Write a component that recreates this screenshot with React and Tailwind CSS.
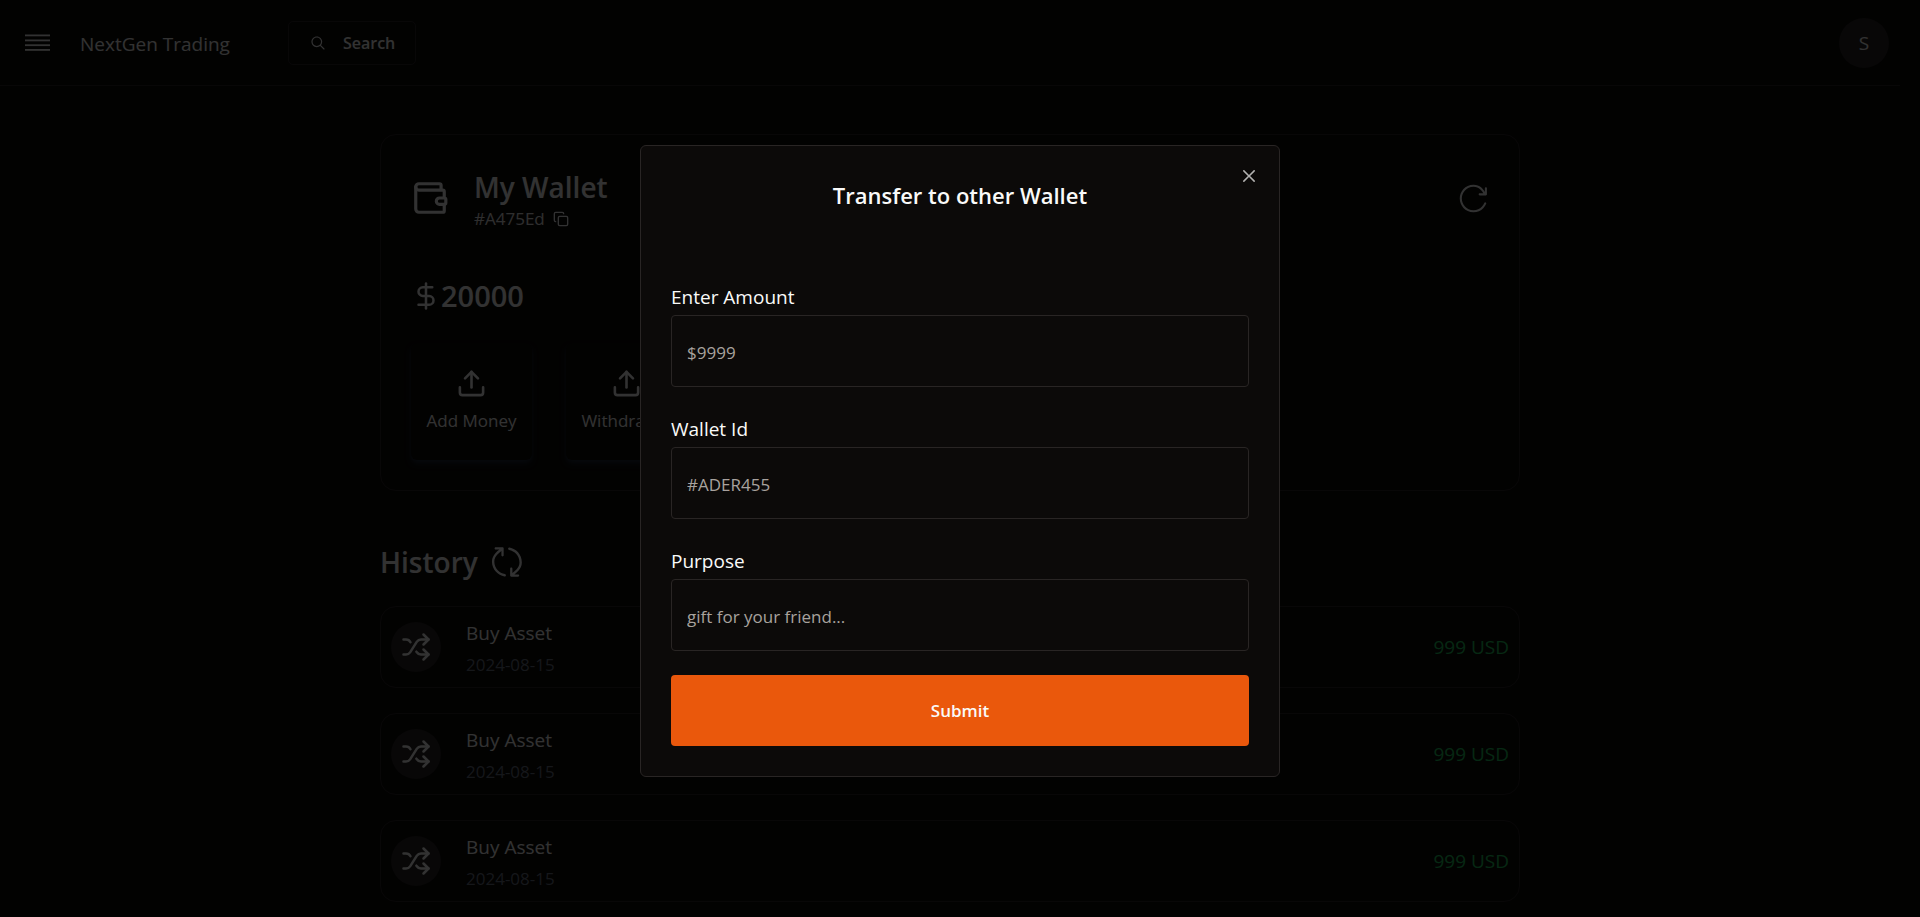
import React from "react";
import { Copy, DollarSign, Shuffle, Upload, Wallet } from "lucide-react";
import { RxCross2, RxMagnifyingGlass, RxReload, RxUpdate } from "react-icons/rx";

const actions = ["Add Money", "Withdrawal", "Transfer"];

const history = [
  { id: 1, title: "Buy Asset", date: "2024-08-15", amount: "999 USD" },
  { id: 2, title: "Buy Asset", date: "2024-08-15", amount: "999 USD" },
  { id: 3, title: "Buy Asset", date: "2024-08-15", amount: "999 USD" },
];

const fields = [
  { id: "amount", label: "Enter Amount", placeholder: "$9999" },
  { id: "wallet-id", label: "Wallet Id", placeholder: "#ADER455" },
  { id: "purpose", label: "Purpose", placeholder: "gift for your friend..." },
];

function MenuIcon() {
  return (
    <svg width="25" height="18" viewBox="0 0 25 18" fill="currentColor" aria-hidden="true">
      <rect y="0.5" width="25" height="1.8" />
      <rect y="5.5" width="25" height="1.8" />
      <rect y="10.3" width="25" height="1.8" />
      <rect y="15" width="25" height="1.8" />
    </svg>
  );
}

function Navbar() {
  return (
    <header className="flex h-[86px] items-center justify-between border-b border-[#292524] pr-[11px] pl-[25px]">
      <div className="flex items-center">
        <button type="button" aria-label="Open menu" className="flex">
          <MenuIcon />
        </button>
        <p className="ml-[30px] pt-0.5 text-[19px] leading-7">NextGen Trading</p>
        <button
          type="button"
          className="ml-[58px] flex h-11 items-center gap-4 rounded-[5px] border border-[#292524] px-5 text-[16px] leading-6 font-semibold"
        >
          <RxMagnifyingGlass className="size-[18px]" />
          Search
        </button>
      </div>
      <button
        type="button"
        aria-label="Account"
        className="flex size-[50px] items-center justify-center rounded-full bg-[#292524] pt-0.5 text-[19px]"
      >
        S
      </button>
    </header>
  );
}

function WalletCard() {
  return (
    <section className="rounded-2xl border border-[#292524] px-[30px] pt-7 pb-[30px]">
      <div className="flex items-center justify-between">
        <div className="flex items-center gap-[25px]">
          <Wallet className="size-[38px]" />
          <div className="pt-1.5">
            <h1 className="text-[28px] leading-9 font-semibold">My Wallet</h1>
            <div className="flex items-center gap-2 leading-7">
              <p className="text-[17px] text-stone-200">#A475Ed</p>
              <button type="button" aria-label="Copy wallet id">
                <Copy className="size-4" strokeWidth={2} />
              </button>
            </div>
          </div>
        </div>
        <button type="button" aria-label="Refresh wallet">
          <RxReload className="size-[31px]" />
        </button>
      </div>
      <div className="mt-[38px] flex items-center">
        <DollarSign className="size-[30px]" />
        <span className="text-[29px] leading-[50px] font-semibold">20000</span>
      </div>
      <div className="mt-[22px] flex gap-[34px]">
        {actions.map((label) => (
          <button
            key={label}
            type="button"
            className="flex h-[117px] w-[121px] flex-col items-center justify-center rounded-md text-[17px] leading-7 shadow-md shadow-[#1e293b]"
          >
            <Upload className="mb-2 size-[31px]" />
            {label}
          </button>
        ))}
      </div>
    </section>
  );
}

function History() {
  return (
    <section className="pt-[51px]">
      <div className="flex items-center gap-3">
        <h2 className="text-[28px] leading-10 font-semibold">History</h2>
        <button type="button" aria-label="Refresh history">
          <RxUpdate className="size-[34px]" />
        </button>
      </div>
      <ul className="mt-6 flex flex-col gap-[25px]">
        {history.map((item) => (
          <li
            key={item.id}
            className="flex h-[82px] items-center justify-between rounded-2xl border border-[#292524] px-2.5"
          >
            <div className="flex items-center gap-[25px]">
              <div className="flex size-[50px] items-center justify-center rounded-full bg-[#292524]">
                <Shuffle className="size-[30px]" />
              </div>
              <div className="pt-1">
                <p className="text-[19px] leading-8">{item.title}</p>
                <p className="text-[17px] leading-8 text-gray-500">{item.date}</p>
              </div>
            </div>
            <p className="text-[19px] leading-8 text-[#22c55e]">{item.amount}</p>
          </li>
        ))}
      </ul>
    </section>
  );
}

function TransferDialog() {
  return (
    <div className="fixed inset-0 flex items-center justify-center bg-black/80 pt-1">
      <div
        role="dialog"
        aria-modal="true"
        aria-labelledby="dialog-title"
        className="relative w-full max-w-[640px] rounded-md border border-[#292524] bg-[#0c0a09] px-[30px] pt-[31px] pb-[30px]"
      >
        <h2 id="dialog-title" className="text-center text-[22px] leading-9 font-semibold">
          Transfer to other Wallet
        </h2>
        <button type="button" aria-label="Close" className="absolute top-5 right-5 opacity-70">
          <RxCross2 className="size-5" />
        </button>
        <form className="mt-[66px]">
          {fields.map((field) => (
            <div key={field.id} className="mb-6">
              <label htmlFor={field.id} className="block text-[19px] leading-9 font-medium">
                {field.label}
              </label>
              <input
                id={field.id}
                type="text"
                placeholder={field.placeholder}
                className="block h-18 w-full rounded-[4px] border border-[#292524] bg-transparent px-[15px] pt-1 text-[17px] leading-5 placeholder:text-[#a8a29e]"
              />
            </div>
          ))}
          <button
            type="submit"
            className="h-[71px] w-full rounded-[4px] bg-[#ea580c] pt-0.5 text-[17px] font-semibold"
          >
            Submit
          </button>
        </form>
      </div>
    </div>
  );
}

export default function App() {
  return (
    <div className="h-screen overflow-hidden bg-[#0c0a09] pr-5 font-['Open_Sans','Noto_Sans',sans-serif] text-[#fafaf9]">
      <Navbar />
      <main className="mx-auto mt-12 w-3/5">
        <WalletCard />
        <History />
      </main>
      <TransferDialog />
    </div>
  );
}
